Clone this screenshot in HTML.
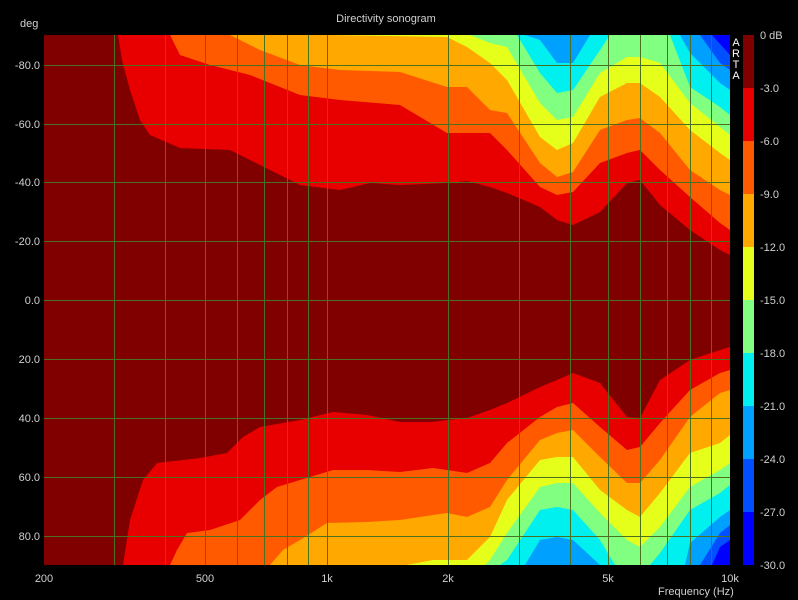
<!DOCTYPE html>
<html><head><style>
html,body{margin:0;padding:0;background:#000;}
svg{display:block;font-family:"Liberation Sans",sans-serif;}
</style></head><body>
<svg width="798" height="600" viewBox="0 0 798 600" xmlns="http://www.w3.org/2000/svg">
<rect width="798" height="600" fill="#000"/>
<rect x="44" y="35" width="686" height="530" fill="#0000ff"/>
<polygon fill="#0050ff" points="44,35 712,35 730,55 730,540 720,547 712,565 44,565"/>
<polygon fill="#00a0ff" points="44,35 700,35 720,63 730,70 730,525 720,533 700,565 44,565"/>
<polygon fill="#00f0f0" points="44,35 525,35 540,40 557,63 573,63 590,35 680,35 690,53 720,83 730,90 730,510 720,517 690,543 685,565 600,565 573,540 557,537 540,540 525,565 44,565"/>
<polygon fill="#80ff80" points="44,35 517,35 540,73 557,93 573,90 600,50 610,35 670,35 690,87 720,107 730,115 730,485 720,493 690,510 660,553 650,565 615,565 600,540 573,510 557,507 540,510 507,560 500,565 44,565"/>
<polygon fill="#e6ff1a" points="44,35 470,35 490,43 507,47 540,103 557,120 573,117 600,73 627,57 640,57 660,63 690,103 720,127 730,135 730,463 720,470 690,487 660,527 640,547 627,540 600,513 573,483 557,483 540,487 507,533 490,560 485,565 44,565"/>
<polygon fill="#ffa800" points="44,35 330,35 447,37 467,47 490,63 507,80 540,137 557,150 573,143 600,97 627,83 640,83 660,97 690,130 720,153 730,160 730,435 720,443 690,453 660,493 640,517 627,510 600,490 573,457 557,457 540,460 507,500 490,537 467,560 433,560 407,565 44,565"/>
<polygon fill="#ff5a00" points="44,35 230,35 260,50 300,65 340,70 400,72 447,87 467,87 490,110 507,113 540,163 557,177 573,172 600,130 627,120 640,118 660,133 690,170 720,190 730,195 730,390 720,393 690,417 660,460 640,483 627,483 600,457 573,430 557,433 540,440 507,480 490,507 467,517 447,513 433,515 400,520 367,522 327,523 300,540 283,550 270,565 44,565"/>
<polygon fill="#e80000" points="44,35 170,35 180,55 210,65 250,75 300,95 340,100 400,105 447,133 467,133 490,133 507,150 540,187 557,195 573,192 600,163 627,153 640,150 660,170 690,197 720,223 730,230 730,370 720,373 690,390 660,423 640,447 627,450 600,427 573,403 557,407 540,417 507,443 490,463 467,473 447,470 433,468 400,472 367,470 333,470 300,480 277,487 260,500 240,520 210,530 187,533 177,550 170,565 44,565"/>
<polygon fill="#800000" points="44,35 118,35 122,60 130,90 140,120 150,135 180,148 230,150 260,165 300,185 340,190 370,183 400,185 447,183 467,181 490,187 507,193 540,207 557,220 573,225 600,212 627,183 640,180 660,205 690,230 720,250 730,255 730,347 720,350 690,360 660,380 640,418 627,417 600,383 573,373 557,380 540,387 507,403 490,410 467,418 447,420 433,422 400,422 367,415 333,412 300,420 260,427 243,437 227,453 200,458 157,463 143,480 130,520 123,565 44,565"/>
<g stroke="#4a7020" stroke-width="1">
<line x1="114.5" y1="35" x2="114.5" y2="565"/><line x1="165.5" y1="35" x2="165.5" y2="565"/>
<line x1="205.5" y1="35" x2="205.5" y2="565"/><line x1="237.5" y1="35" x2="237.5" y2="565"/>
<line x1="264.5" y1="35" x2="264.5" y2="565"/><line x1="287.5" y1="35" x2="287.5" y2="565"/>
<line x1="308.5" y1="35" x2="308.5" y2="565"/><line x1="327.5" y1="35" x2="327.5" y2="565"/>
<line x1="448.5" y1="35" x2="448.5" y2="565"/><line x1="519.5" y1="35" x2="519.5" y2="565"/>
<line x1="570.5" y1="35" x2="570.5" y2="565"/><line x1="608.5" y1="35" x2="608.5" y2="565"/>
<line x1="640.5" y1="35" x2="640.5" y2="565"/><line x1="667.5" y1="35" x2="667.5" y2="565"/>
<line x1="690.5" y1="35" x2="690.5" y2="565"/><line x1="711.5" y1="35" x2="711.5" y2="565"/>
<line x1="44" y1="65.5" x2="730" y2="65.5"/><line x1="44" y1="124.5" x2="730" y2="124.5"/>
<line x1="44" y1="182.5" x2="730" y2="182.5"/><line x1="44" y1="241.5" x2="730" y2="241.5"/>
<line x1="44" y1="300.5" x2="730" y2="300.5"/><line x1="44" y1="359.5" x2="730" y2="359.5"/>
<line x1="44" y1="418.5" x2="730" y2="418.5"/><line x1="44" y1="477.5" x2="730" y2="477.5"/>
<line x1="44" y1="536.5" x2="730" y2="536.5"/>
</g>
<rect x="743" y="35" width="11" height="53" fill="#800000"/>
<rect x="743" y="88" width="11" height="53" fill="#e80000"/>
<rect x="743" y="141" width="11" height="53" fill="#ff5a00"/>
<rect x="743" y="194" width="11" height="53" fill="#ffa800"/>
<rect x="743" y="247" width="11" height="53" fill="#e6ff1a"/>
<rect x="743" y="300" width="11" height="53" fill="#80ff80"/>
<rect x="743" y="353" width="11" height="53" fill="#00f0f0"/>
<rect x="743" y="406" width="11" height="53" fill="#00a0ff"/>
<rect x="743" y="459" width="11" height="53" fill="#0050ff"/>
<rect x="743" y="512" width="11" height="53" fill="#0000ff"/>
<g fill="#d0d0d0" font-size="11">
<text x="386" y="22" text-anchor="middle">Directivity sonogram</text>
<text x="20" y="27">deg</text>
<g text-anchor="end">
<text x="40" y="69">-80.0</text><text x="40" y="128">-60.0</text><text x="40" y="186">-40.0</text>
<text x="40" y="245">-20.0</text><text x="40" y="304">0.0</text><text x="40" y="363">20.0</text>
<text x="40" y="422">40.0</text><text x="40" y="481">60.0</text><text x="40" y="540">80.0</text>
</g>
<g text-anchor="middle">
<text x="44" y="582">200</text><text x="205" y="582">500</text><text x="327" y="582">1k</text>
<text x="448" y="582">2k</text><text x="608" y="582">5k</text><text x="730" y="582">10k</text>
</g>
<text x="658" y="595">Frequency (Hz)</text>
<text x="760" y="39">0 dB</text><text x="760" y="92">-3.0</text><text x="760" y="145">-6.0</text>
<text x="760" y="198">-9.0</text><text x="760" y="251">-12.0</text><text x="760" y="304">-15.0</text>
<text x="760" y="357">-18.0</text><text x="760" y="410">-21.0</text><text x="760" y="463">-24.0</text>
<text x="760" y="516">-27.0</text><text x="760" y="569">-30.0</text>
<g text-anchor="middle" fill="#fff"><text x="736" y="46">A</text><text x="736" y="57">R</text><text x="736" y="68">T</text><text x="736" y="79">A</text></g>
</g>
</svg>
</body></html>
